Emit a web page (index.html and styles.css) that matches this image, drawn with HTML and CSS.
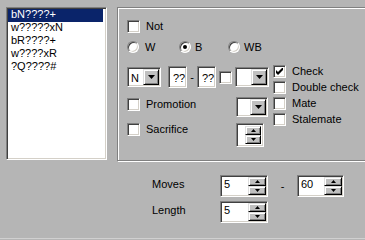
FILE: index.html
```html
<!DOCTYPE html>
<html>
<head>
<meta charset="utf-8">
<link rel="stylesheet" href="styles.css">
</head>
<body>
<div class="app">
  <div class="top">
    <div class="listbox">
      <div class="item sel">bN????+</div>
      <div class="item">w?????xN</div>
      <div class="item">bR????+</div>
      <div class="item">w????xR</div>
      <div class="item">?Q????#</div>
    </div>
    <div class="frame">
      <div class="row-not"><span class="cb"></span><span class="lbl">Not</span></div>
      <div class="row-radios">
        <div class="opt o-w"><span class="rb"></span><span class="lbl lw">W</span></div>
        <div class="opt o-b"><span class="rb on"></span><span class="lbl">B</span></div>
        <div class="opt"><span class="rb"></span><span class="lbl">WB</span></div>
      </div>
      <div class="main">
        <div class="left">
          <div class="row-a">
            <div class="combo c34"><span class="val">N</span><span class="dd"><svg width="7" height="4" viewBox="0 0 7 4"><path d="M0 0h7L3.5 4z"/></svg></span></div>
            <div class="edit e1">??</div>
            <span class="dash">-</span>
            <div class="edit">??</div>
            <span class="cb cb-a"></span>
            <div class="combo c34 c2"><span class="val"></span><span class="dd"><svg width="7" height="4" viewBox="0 0 7 4"><path d="M0 0h7L3.5 4z"/></svg></span></div>
          </div>
          <div class="row-b">
            <div class="chk chk-b"><span class="cb"></span><span class="lbl">Promotion</span></div>
            <div class="combo c32"><span class="val"></span><span class="dd"><svg width="7" height="4" viewBox="0 0 7 4"><path d="M0 0h7L3.5 4z"/></svg></span></div>
          </div>
          <div class="row-c">
            <div class="chk chk-c"><span class="cb"></span><span class="lbl">Sacrifice</span></div>
            <div class="spin s-sac">
              <span class="sv"></span>
              <span class="btns">
                <span class="sb"><svg width="5" height="3" viewBox="0 0 5 3"><path d="M0 3h5L2.5 0z"/></svg></span>
                <span class="sb"><svg width="5" height="3" viewBox="0 0 5 3"><path d="M0 0h5L2.5 3z"/></svg></span>
              </span>
            </div>
          </div>
        </div>
        <div class="right">
          <div class="rchk"><span class="cb checked"><svg width="7" height="7" viewBox="0 0 7 7"><path d="M0 2v3l2 2 5-5V-1L2 4z"/></svg></span><span class="lbl">Check</span></div>
          <div class="rchk"><span class="cb"></span><span class="lbl">Double check</span></div>
          <div class="rchk"><span class="cb"></span><span class="lbl">Mate</span></div>
          <div class="rchk"><span class="cb"></span><span class="lbl">Stalemate</span></div>
        </div>
      </div>
    </div>
  </div>
  <div class="bottom">
    <span class="blbl">Moves</span>
    <div class="spin s-num">
      <span class="sv">5</span>
      <span class="btns">
        <span class="sb"><svg width="5" height="3" viewBox="0 0 5 3"><path d="M0 3h5L2.5 0z"/></svg></span>
        <span class="sb"><svg width="5" height="3" viewBox="0 0 5 3"><path d="M0 0h5L2.5 3z"/></svg></span>
      </span>
    </div>
    <span class="bdash">-</span>
    <div class="spin s-num s-60">
      <span class="sv">60</span>
      <span class="btns">
        <span class="sb"><svg width="5" height="3" viewBox="0 0 5 3"><path d="M0 3h5L2.5 0z"/></svg></span>
        <span class="sb"><svg width="5" height="3" viewBox="0 0 5 3"><path d="M0 0h5L2.5 3z"/></svg></span>
      </span>
    </div>
    <span class="blbl">Length</span>
    <div class="spin s-num">
      <span class="sv">5</span>
      <span class="btns">
        <span class="sb"><svg width="5" height="3" viewBox="0 0 5 3"><path d="M0 3h5L2.5 0z"/></svg></span>
        <span class="sb"><svg width="5" height="3" viewBox="0 0 5 3"><path d="M0 0h5L2.5 3z"/></svg></span>
      </span>
    </div>
  </div>
  <div class="foot"></div>
</div>
</body>
</html>
```
FILE: styles.css
```css
* { box-sizing: border-box; margin: 0; padding: 0; }
html, body { width: 365px; height: 240px; overflow: hidden; }
body {
  background: #b5b5b5;
  font-family: "Liberation Sans", Arial, sans-serif;
  font-size: 11px;
  color: #000;
}
svg { display: block; fill: #000; }

.app {
  width: 365px;
  height: 240px;
  display: flex;
  flex-direction: column;
  overflow: hidden;
}

/* sunken field look */
.listbox, .edit, .combo, .spin, .cb {
  background: #fff;
  border: 1px solid;
  border-color: #808080 #fff #fff #808080;
  box-shadow: inset 1px 1px 0 #404040, inset -1px -1px 0 #d4d0c8;
}

.top {
  display: flex;
  align-items: flex-start;
  padding: 7px 0 0 6px;
}

.listbox {
  flex: none;
  width: 101px;
  height: 153px;
  padding: 1px 3px 0 1px;
}
.item {
  height: 13px;
  line-height: 11px;
  padding: 0 0 2px 3px;
  white-space: nowrap;
}
.item.sel { background: #0a246a; color: #fff; }

.frame {
  flex: none;
  margin-left: 10px;
  width: 260px;
  height: 154px;
  border: 1px solid #808080;
  box-shadow: inset 1px 1px 0 #fff, 1px 1px 0 #fff;
  padding: 12px 0 0 9px;
}

.cb {
  flex: none;
  width: 13px;
  height: 13px;
  display: flex;
  align-items: center;
  justify-content: center;
}

.lbl { white-space: nowrap; }

.row-not {
  display: flex;
  align-items: center;
  height: 13px;
  line-height: 13px;
}
.row-not .lbl { margin-left: 6px; }

.row-radios {
  display: flex;
  margin-top: 8px;
  height: 12px;
  line-height: 12px;
}
.opt { display: flex; align-items: center; }
.o-w { width: 52px; }
.o-b { width: 49px; }
.opt .lbl { margin-left: 4px; }
.opt .lw { margin-left: 6px; }

.rb {
  flex: none;
  width: 12px;
  height: 12px;
  border-radius: 50%;
  background: #fff;
  border: 1px solid;
  border-color: #808080 #fff #fff #808080;
  box-shadow: inset 1px 1px 0 #404040, inset -1px -1px 0 #d4d0c8;
  display: flex;
  align-items: center;
  justify-content: center;
}
.rb.on::after {
  content: "";
  width: 4px;
  height: 4px;
  border-radius: 50%;
  background: #000;
}

.main {
  display: flex;
  margin-top: 12px;
}
.left { width: 146px; flex: none; }

.row-a {
  display: flex;
  align-items: center;
  height: 22px;
  margin-top: 1px;
}

.combo {
  flex: none;
  height: 20px;
  padding: 1px;
  display: flex;
}
.c34 { width: 34px; }
.c32 { width: 32px; margin-left: 1px; }
.val {
  flex: 1;
  padding: 1px 0 0 2px;
  line-height: 16px;
}
.dd, .sb {
  flex: none;
  background: #c0c0c0;
  border: 1px solid;
  border-color: #dfdfdf #000 #000 #dfdfdf;
  box-shadow: inset 1px 1px 0 #fff, inset -1px -1px 0 #808080;
  display: flex;
  align-items: center;
  justify-content: center;
}
.dd { width: 16px; height: 16px; }

.edit {
  flex: none;
  width: 19px;
  height: 22px;
  padding: 3px 0 0 4px;
  line-height: 16px;
}
.e1 { margin-left: 7px; }
.dash {
  width: 10px;
  text-align: center;
  line-height: 16px;
}
.cb-a { margin-left: 3px; }
.c2 { margin-left: 3px; }

.row-b {
  display: flex;
  align-items: flex-start;
  margin-top: 9px;
  height: 20px;
}
.chk { display: flex; align-items: center; line-height: 13px; }
.chk .lbl { margin-left: 6px; }
.chk-b { width: 108px; margin-top: 1px; }

.row-c {
  display: flex;
  align-items: flex-start;
  margin-top: 6px;
}
.chk-c { width: 109px; }

.spin {
  flex: none;
  padding: 1px;
  display: flex;
}
.sv {
  flex: 1;
  padding-left: 1px;
  line-height: 15px;
}
.btns {
  flex: none;
  display: flex;
  flex-direction: column;
}
.sb { flex: 1; }
.s-sac { width: 28px; height: 24px; padding: 2px 2px 2px 1px; }
.s-sac .btns { width: 16px; }
.s-num { width: 48px; height: 22px; }
.s-num .btns { width: 18px; }
.s-60 { width: 47px; }
.s-num .sv { padding-left: 2px; }

.right { flex: none; }
.rchk {
  display: flex;
  align-items: center;
  height: 13px;
  line-height: 13px;
  margin-bottom: 3px;
}
.rchk .lbl { margin-left: 6px; }

.bottom {
  display: grid;
  grid-template-columns: 68px 48px 29px 47px;
  grid-template-rows: 22px 22px;
  row-gap: 4px;
  padding: 14px 0 0 152px;
}
.blbl { line-height: 18px; }
.bdash { text-align: center; line-height: 22px; }

.foot {
  margin-top: auto;
  margin-bottom: 1px;
  height: 1px;
  background: #d0d0d0;
}
```
